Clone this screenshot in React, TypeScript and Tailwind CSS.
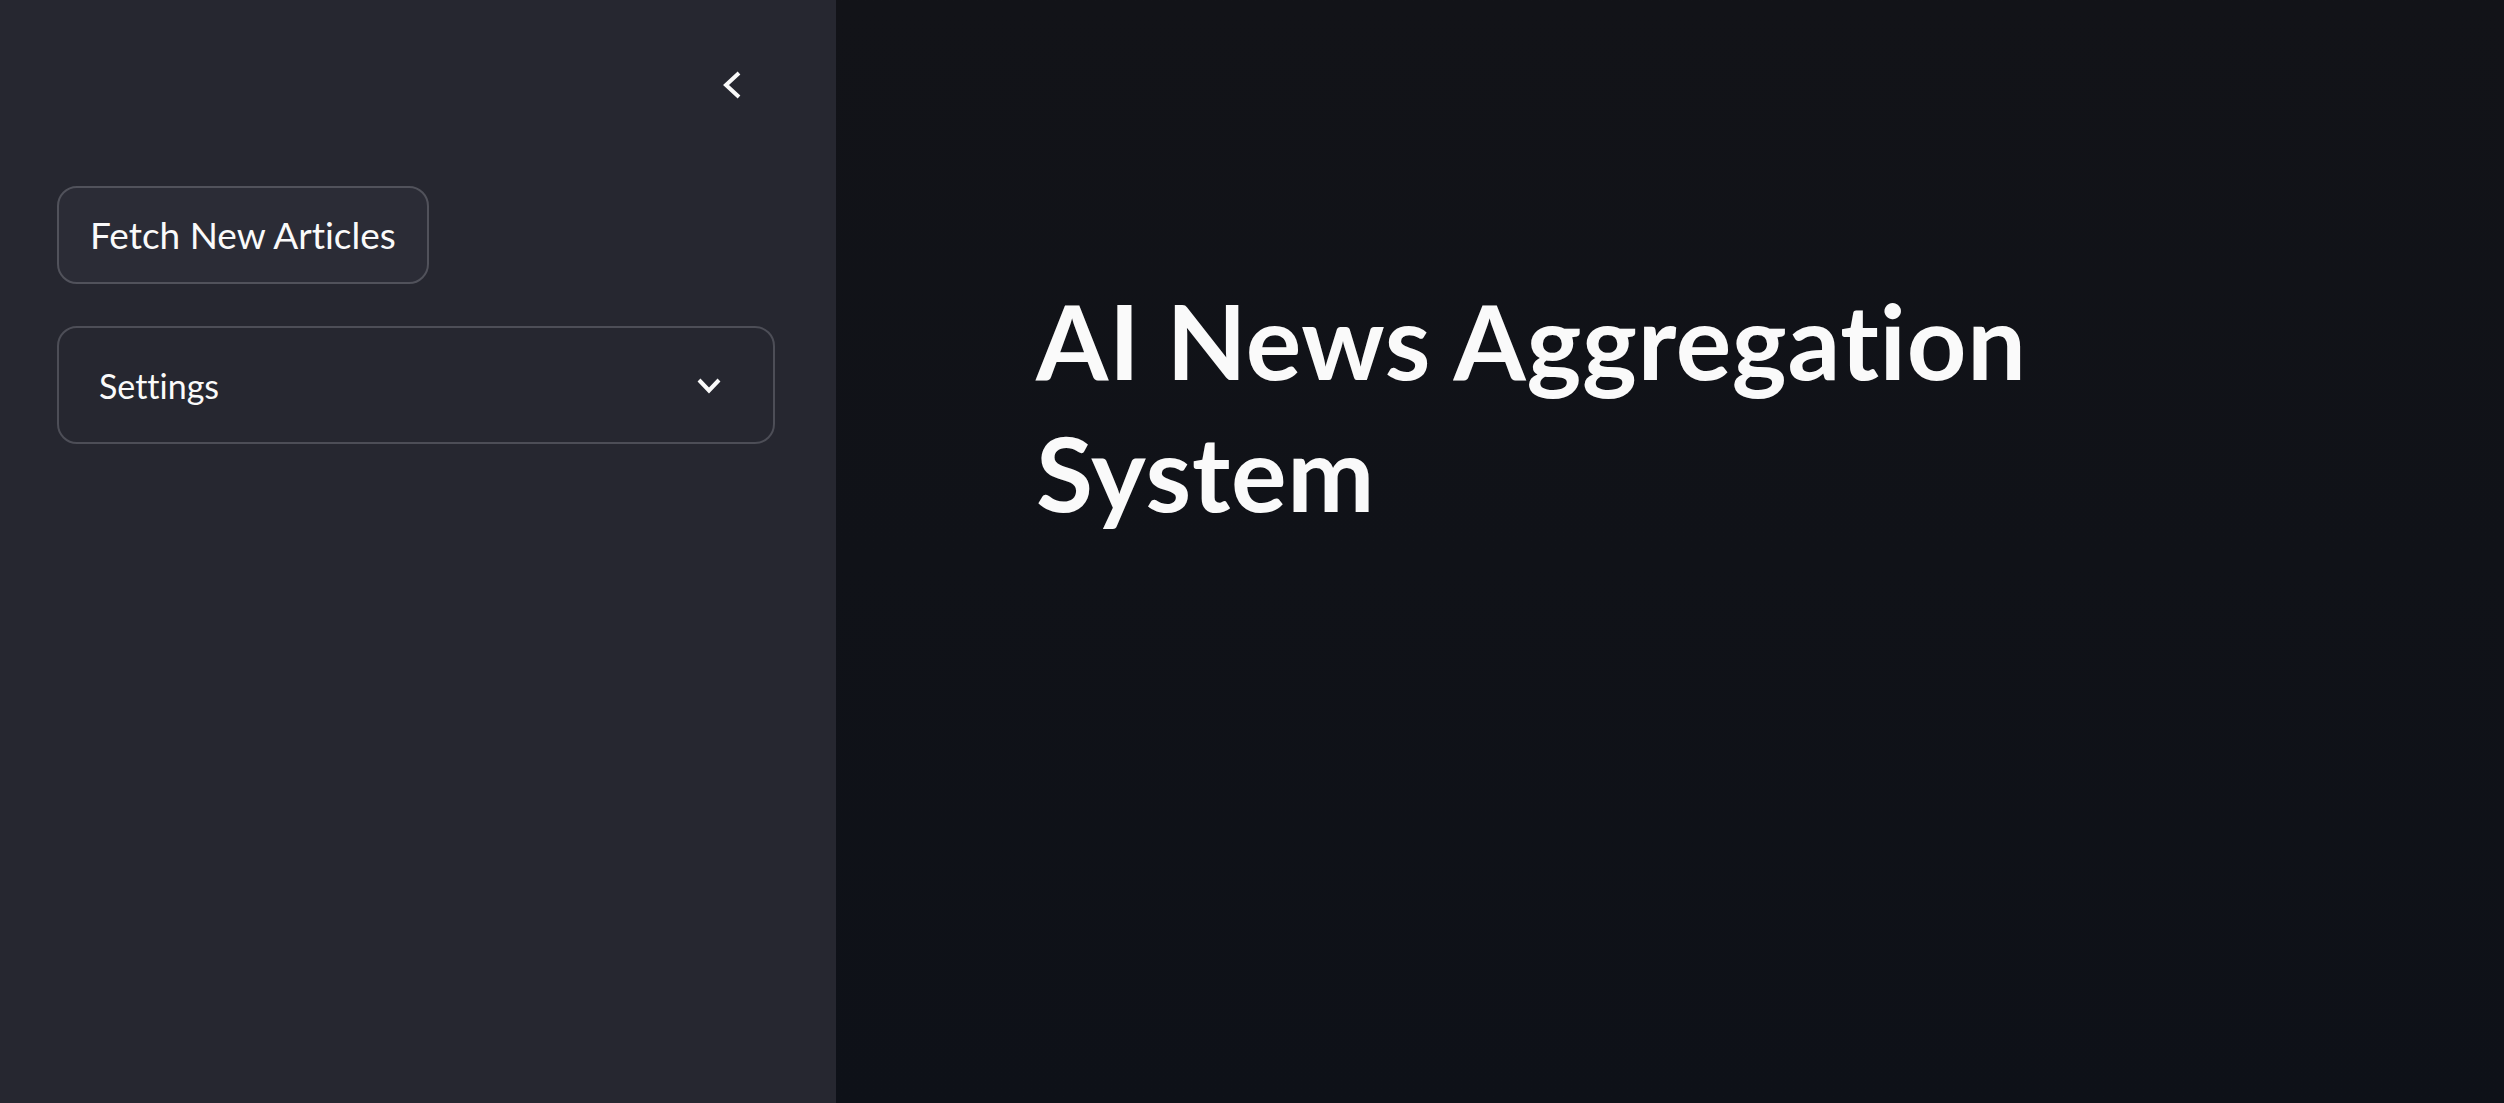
const font = "font-['Lato','Liberation_Sans',sans-serif] [font-variant-ligatures:none]"

function ChevronLeft() {
  return (
    <svg width="24" height="32" viewBox="0 0 24 32" fill="none">
      <polyline points="19,4 6,16 19,28" stroke="#fafafa" strokeWidth="4" />
    </svg>
  )
}

function ChevronDown() {
  return (
    <svg width="28" height="21" viewBox="0 0 28 21" fill="none">
      <polyline points="4,5 14,15.5 24,5" stroke="#fafafa" strokeWidth="4" />
    </svg>
  )
}

function Sidebar() {
  return (
    <aside className="flex h-full w-[836px] shrink-0 flex-col bg-[#262730] pl-[57px] pr-[61px]">
      <div className="flex h-[170px] items-center justify-end pr-[23px]">
        <button className="flex h-10 w-10 items-center justify-center">
          <ChevronLeft />
        </button>
      </div>

      <div className="mt-[16px]">
        <button className="flex h-[98px] items-center rounded-[20px] border-2 border-[#51525b] bg-[#2b2c36] px-[31px] text-[37px] text-[#fafafa]">
          Fetch New Articles
        </button>
      </div>

      <div className="mt-[42px] flex h-[118px] items-center justify-between rounded-[20px] border-2 border-[#4d4e57] pl-[40px] pr-[50px]">
        <span className="text-[34px] text-[#fafafa]">Settings</span>
        <ChevronDown />
      </div>
    </aside>
  )
}

export default function App() {
  return (
    <div className={`flex h-screen w-full overflow-hidden ${font}`}>
      <Sidebar />
      <main className="flex-1 bg-gradient-to-b from-[#121318] to-[#0e1118] pl-[200px] pr-[200px] pt-[274px]">
        <h1 className="text-[104px] font-bold leading-[132px] tracking-[0.7px] text-[#fafafa]">
          AI News Aggregation System
        </h1>
      </main>
    </div>
  )
}
